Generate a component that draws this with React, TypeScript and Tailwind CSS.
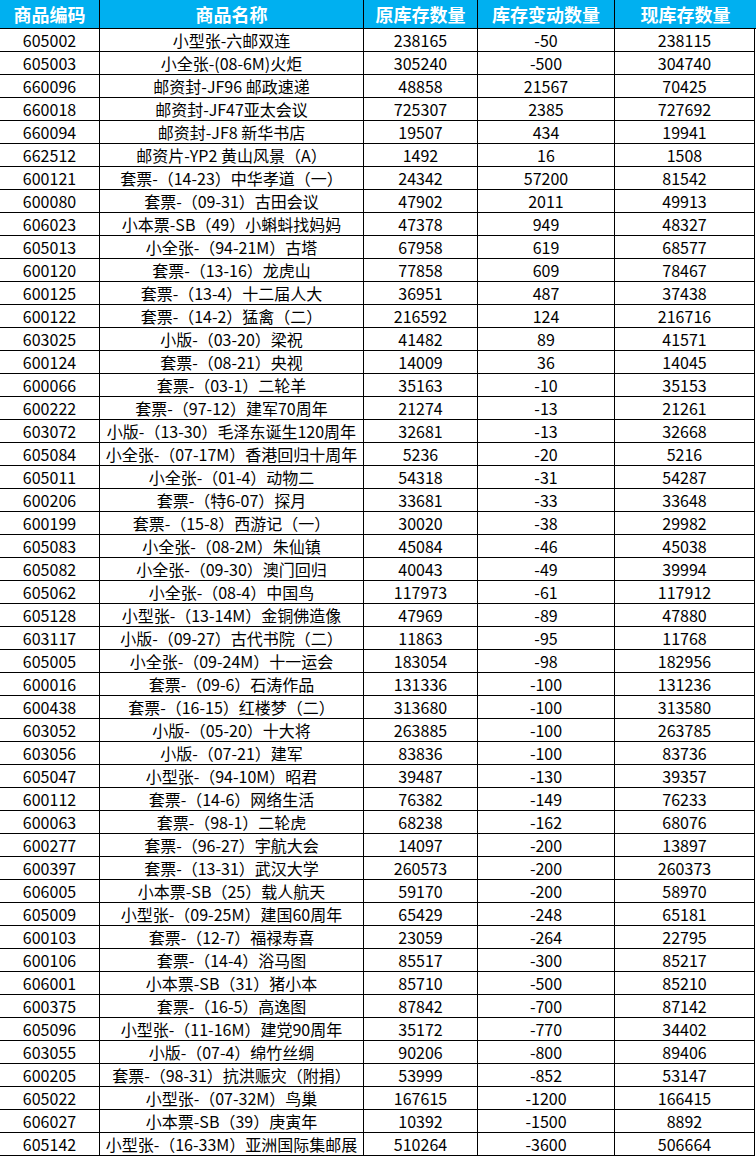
import React from "react";

type Row = [string, string, number, number, number];

const rows: Row[] = [
  ["605002", "小型张-六邮双连", 238165, -50, 238115],
  ["605003", "小全张-(08-6M)火炬", 305240, -500, 304740],
  ["660096", "邮资封-JF96 邮政速递", 48858, 21567, 70425],
  ["660018", "邮资封-JF47亚太会议", 725307, 2385, 727692],
  ["660094", "邮资封-JF8 新华书店", 19507, 434, 19941],
  ["662512", "邮资片-YP2 黄山风景（A）", 1492, 16, 1508],
  ["600121", "套票-（14-23）中华孝道（一）", 24342, 57200, 81542],
  ["600080", "套票-（09-31）古田会议", 47902, 2011, 49913],
  ["606023", "小本票-SB（49）小蝌蚪找妈妈", 47378, 949, 48327],
  ["605013", "小全张-（94-21M）古塔", 67958, 619, 68577],
  ["600120", "套票-（13-16）龙虎山", 77858, 609, 78467],
  ["600125", "套票-（13-4）十二届人大", 36951, 487, 37438],
  ["600122", "套票-（14-2）猛禽（二）", 216592, 124, 216716],
  ["603025", "小版-（03-20）梁祝", 41482, 89, 41571],
  ["600124", "套票-（08-21）央视", 14009, 36, 14045],
  ["600066", "套票-（03-1）二轮羊", 35163, -10, 35153],
  ["600222", "套票-（97-12）建军70周年", 21274, -13, 21261],
  ["603072", "小版-（13-30）毛泽东诞生120周年", 32681, -13, 32668],
  ["605084", "小全张-（07-17M）香港回归十周年", 5236, -20, 5216],
  ["605011", "小全张-（01-4）动物二", 54318, -31, 54287],
  ["600206", "套票-（特6-07）探月", 33681, -33, 33648],
  ["600199", "套票-（15-8）西游记（一）", 30020, -38, 29982],
  ["605083", "小全张-（08-2M）朱仙镇", 45084, -46, 45038],
  ["605082", "小全张-（09-30）澳门回归", 40043, -49, 39994],
  ["605062", "小全张-（08-4）中国鸟", 117973, -61, 117912],
  ["605128", "小型张-（13-14M）金铜佛造像", 47969, -89, 47880],
  ["603117", "小版-（09-27）古代书院（二）", 11863, -95, 11768],
  ["605005", "小全张-（09-24M）十一运会", 183054, -98, 182956],
  ["600016", "套票-（09-6）石涛作品", 131336, -100, 131236],
  ["600438", "套票-（16-15）红楼梦（二）", 313680, -100, 313580],
  ["603052", "小版-（05-20）十大将", 263885, -100, 263785],
  ["603056", "小版-（07-21）建军", 83836, -100, 83736],
  ["605047", "小型张-（94-10M）昭君", 39487, -130, 39357],
  ["600112", "套票-（14-6）网络生活", 76382, -149, 76233],
  ["600063", "套票-（98-1）二轮虎", 68238, -162, 68076],
  ["600277", "套票-（96-27）宇航大会", 14097, -200, 13897],
  ["600397", "套票-（13-31）武汉大学", 260573, -200, 260373],
  ["606005", "小本票-SB（25）载人航天", 59170, -200, 58970],
  ["605009", "小型张-（09-25M）建国60周年", 65429, -248, 65181],
  ["600103", "套票-（12-7）福禄寿喜", 23059, -264, 22795],
  ["600106", "套票-（14-4）浴马图", 85517, -300, 85217],
  ["606001", "小本票-SB（31）猪小本", 85710, -500, 85210],
  ["600375", "套票-（16-5）高逸图", 87842, -700, 87142],
  ["605096", "小型张-（11-16M）建党90周年", 35172, -770, 34402],
  ["603055", "小版-（07-4）绵竹丝绸", 90206, -800, 89406],
  ["600205", "套票-（98-31）抗洪赈灾（附捐）", 53999, -852, 53147],
  ["605022", "小型张-（07-32M）鸟巢", 167615, -1200, 166415],
  ["606027", "小本票-SB（39）庚寅年", 10392, -1500, 8892],
  ["605142", "小型张-（16-33M）亚洲国际集邮展", 510264, -3600, 506664],
];

const font = {
  fontFamily: '"Noto Sans CJK SC", "Noto Sans", sans-serif',
};

export default function App() {
  return (
    <div className="w-[756px] h-[1156px] bg-white overflow-hidden" style={font}>
      <div className="grid grid-cols-[100px_264px_114px_137px_141px] h-[29px] bg-[#00b0f0] border-b border-black text-white font-bold text-[18px] leading-none">
        <div className="flex items-center justify-center border-r border-black pb-[1px]">商品编码</div>
        <div className="flex items-center justify-center border-r border-black pb-[1px]">商品名称</div>
        <div className="flex items-center justify-center border-r border-black pb-[1px]">原库存数量</div>
        <div className="flex items-center justify-center border-r border-black pb-[1px]">库存变动数量</div>
        <div className="flex items-center justify-center pb-[1px]">现库存数量</div>
      </div>
      {rows.map((r) => (
        <div
          key={r[0]}
          className="grid grid-cols-[100px_264px_114px_137px_140px] w-[755px] h-[23px] border-b border-black text-black text-[16px] leading-none"
        >
          <div className="flex items-center justify-center border-r border-black">{r[0]}</div>
          <div className="flex items-center justify-center border-r border-black whitespace-nowrap overflow-hidden">{r[1]}</div>
          <div className="flex items-center justify-center border-r border-black">{r[2]}</div>
          <div className="flex items-center justify-center border-r border-black">{r[3]}</div>
          <div className="flex items-center justify-center border-r border-black">{r[4]}</div>
        </div>
      ))}
    </div>
  );
}
